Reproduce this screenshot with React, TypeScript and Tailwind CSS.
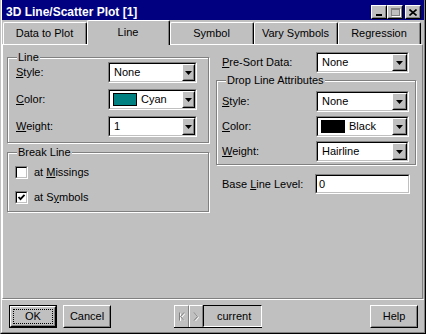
import React from "react";

const raised =
  "border border-t-white border-l-white border-r-black border-b-black";
const raisedInner =
  "border border-t-[#c0c0c0] border-l-[#c0c0c0] border-r-[#808080] border-b-[#808080]";

function U({ children }: { children: React.ReactNode }) {
  return <span className="underline underline-offset-[1px] decoration-1">{children}</span>;
}

function Arrow() {
  return (
    <svg width="7" height="4" viewBox="0 0 7 4">
      <path d="M0 0h7L3.5 4z" fill="#000" />
    </svg>
  );
}

function Combo({
  w,
  text,
  swatch,
  btn = 14,
}: {
  w: number;
  text: string;
  swatch?: string;
  btn?: number;
}) {
  return (
    <div
      className="flex h-[21px] border border-t-[#808080] border-l-[#808080] border-r-white border-b-white"
      style={{ width: w }}
    >
      <div className="flex flex-1 items-stretch bg-white border border-t-black border-l-black border-r-[#c0c0c0] border-b-[#c0c0c0]">
        <div className="flex flex-1 items-center pl-[4px] gap-[4px]">
          {swatch && (
            <span
              className="inline-block w-[24px] h-[13px] -ml-[1px] border border-black"
              style={{ background: swatch }}
            />
          )}
          <span>{text}</span>
        </div>
        <div className={`flex ${raised}`} style={{ width: btn }}>
          <div className={`flex flex-1 items-center justify-center bg-[#c0c0c0] ${raisedInner}`}>
            <Arrow />
          </div>
        </div>
      </div>
    </div>
  );
}

function Group({
  title,
  className,
  children,
}: {
  title: React.ReactNode;
  className: string;
  children: React.ReactNode;
}) {
  return (
    <div
      className={`relative border border-[#808080] shadow-[inset_1px_1px_0_#fff,1px_1px_0_#fff] ${className}`}
    >
      <span className="absolute -top-[7px] left-[9px] bg-[#c0c0c0] px-[1px] leading-[13px]">
        {title}
      </span>
      {children}
    </div>
  );
}

function Check({ checked, label }: { checked?: boolean; label: React.ReactNode }) {
  return (
    <div className="flex items-center h-[13px]">
      <div className="w-[13px] h-[13px] border border-t-[#808080] border-l-[#808080] border-r-white border-b-white">
        <div className="w-full h-full bg-white border border-t-black border-l-black border-r-[#c0c0c0] border-b-[#c0c0c0]">
          {checked && (
            <svg width="9" height="9" viewBox="0 0 9 9">
              <path d="M1.5 4 L3.5 6.2 L7.5 1.8" stroke="#000" strokeWidth="1.8" fill="none" />
            </svg>
          )}
        </div>
      </div>
      <span className="ml-[6px]">{label}</span>
    </div>
  );
}

function Button({ children, def, w = 48 }: { children: React.ReactNode; def?: boolean; w?: number }) {
  if (def) {
    return (
      <div className="flex h-[23px] border border-black" style={{ width: w }}>
        <div className={`flex flex-1 ${raised}`}>
          <div className={`flex flex-1 p-[1px] ${raisedInner}`}>
            <div className="flex flex-1 items-center justify-center border border-dotted border-black">
              {children}
            </div>
          </div>
        </div>
      </div>
    );
  }
  return (
    <div className={`flex h-[23px] ${raised}`} style={{ width: w }}>
      <div className={`flex flex-1 items-center justify-center ${raisedInner}`}>{children}</div>
    </div>
  );
}

function Tab({ label, w, active }: { label: string; w: number; active?: boolean }) {
  if (active) {
    return (
      <div
        className="relative z-10 -mb-[1px] h-[25px] flex items-center justify-center bg-[#c0c0c0] border-t border-l border-t-white border-l-white border-r border-r-black rounded-tl-[2px] rounded-tr-[2px]"
        style={{ width: w }}
      >
        <div className="flex-1 h-full flex items-center justify-center border-r border-r-[#808080] pb-[1px]">
          {label}
        </div>
      </div>
    );
  }
  return (
    <div
      className="h-[22px] flex bg-[#c0c0c0] border-t border-l border-t-white border-l-white border-r border-r-black rounded-tl-[2px] rounded-tr-[2px]"
      style={{ width: w }}
    >
      <div className="flex-1 flex items-center justify-center border-r border-r-[#808080]">{label}</div>
    </div>
  );
}

function TitleBtn({ children }: { children: React.ReactNode }) {
  return (
    <div className={`w-[16px] h-[14px] flex bg-[#c0c0c0] ${raised}`}>
      <div className={`flex-1 flex items-center justify-center ${raisedInner}`}>{children}</div>
    </div>
  );
}

export default function App() {
  return (
    <div className="w-[426px] h-[334px] bg-[#c0c0c0] text-black text-[11px] leading-[13px] font-['Liberation_Sans',Arial,sans-serif] border-l border-r border-b border-l-[#c0c0c0] border-r-black border-b-black">
      <div className="h-full flex flex-col border-l border-r border-b border-l-white border-r-[#808080] border-b-[#808080]">
        {/* title bar */}
        <div className="h-[20px] flex items-center bg-[#000080] pt-[5px] pb-[1px] pl-[4px] pr-[3px]">
          <span className="flex-1 text-white font-bold text-[12px] leading-[14px]">
            3D Line/Scatter Plot [1]
          </span>
          <TitleBtn>
            <span className="block w-[6px] h-[2px] bg-black mt-[5px] -ml-[1px]" />
          </TitleBtn>
          <TitleBtn>
            <span className="block w-[9px] h-[8px] border border-[#808080] border-t-2 shadow-[1px_1px_0_#fff]" />
          </TitleBtn>
          <div className="w-[2px]" />
          <TitleBtn>
            <svg width="8" height="7" viewBox="0 0 8 7">
              <path d="M0.5 0.5 L7.5 6.5 M7.5 0.5 L0.5 6.5" stroke="#000" strokeWidth="1.6" />
            </svg>
          </TitleBtn>
        </div>

        {/* tabs */}
        <div className="h-[24px] flex items-end pl-[1px]">
          <Tab label="Data to Plot" w={84} />
          <Tab label="Line" w={83} active />
          <Tab label="Symbol" w={84} />
          <Tab label="Vary Symbols" w={84} />
          <Tab label="Regression" w={83} />
        </div>

        {/* panel */}
        <div className="h-[255px] mr-[1px] flex gap-[7px] pl-[4px] border-t border-l border-r border-b border-t-white border-l-white border-r-[#808080] border-b-[#808080]">
          {/* left column */}
          <div className="w-[202px] flex flex-col">
            <Group title="Line" className="mt-[12px] pt-[4px] pb-[5px] pl-[8px] flex flex-col gap-[6px]">
              <div className="flex items-center">
                <span className="w-[92px]">
                  <U>S</U>tyle:
                </span>
                <Combo w={89} text="None" btn={13} />
              </div>
              <div className="flex items-center">
                <span className="w-[92px]">
                  <U>C</U>olor:
                </span>
                <Combo w={89} text="Cyan" swatch="#008080" btn={13} />
              </div>
              <div className="flex items-center">
                <span className="w-[92px]">
                  <U>W</U>eight:
                </span>
                <Combo w={89} text="1" btn={13} />
              </div>
            </Group>

            <Group title="Break Line" className="mt-[9px] pt-[13px] pb-[7px] pl-[7px] flex flex-col gap-[12px]">
              <Check
                label={
                  <>
                    at <U>M</U>issings
                  </>
                }
              />
              <Check
                checked
                label={
                  <>
                    at S<U>y</U>mbols
                  </>
                }
              />
            </Group>
          </div>

          {/* right column */}
          <div className="w-[200px] flex flex-col">
            <div className="mt-[7px] flex items-center pl-[6px]">
              <span className="w-[94px]">
                <U>P</U>re-Sort Data:
              </span>
              <Combo w={93} text="None" btn={15} />
            </div>

            <Group
              title="Drop Line Attributes"
              className="mt-[7px] pt-[10px] pb-[2px] pl-[5px] flex flex-col gap-[4px]"
            >
              <div className="flex items-center">
                <span className="w-[94px]">
                  <U>S</U>tyle:
                </span>
                <Combo w={93} text="None" btn={15} />
              </div>
              <div className="flex items-center">
                <span className="w-[94px]">
                  <U>C</U>olor:
                </span>
                <Combo w={93} text="Black" swatch="#000000" btn={15} />
              </div>
              <div className="flex items-center">
                <span className="w-[94px]">
                  <U>W</U>eight:
                </span>
                <Combo w={93} text="Hairline" btn={15} />
              </div>
            </Group>

            <div className="mt-[9px] flex items-center pl-[6px]">
              <span className="w-[93px]">
                Base <U>L</U>ine Level:
              </span>
              <div className="w-[95px] h-[20px] border border-t-[#808080] border-l-[#808080] border-r-white border-b-white">
                <div className="h-full flex items-center pl-[2px] bg-white border border-t-black border-l-black border-r-[#c0c0c0] border-b-[#c0c0c0]">
                  0
                </div>
              </div>
            </div>
          </div>
        </div>
        <div className="h-[1px] bg-white" />

        {/* bottom buttons */}
        <div className="flex items-start pt-[5px] pl-[7px] pr-[6px]">
          <Button def>OK</Button>
          <div className="ml-[6px]">
            <Button>Cancel</Button>
          </div>
          <div className="ml-[63px] flex h-[23px] border-b border-b-black">
            <div className="w-[15px] flex border-t border-l border-t-white border-l-white border-r border-r-[#808080] items-center justify-center">
              <svg width="7" height="9" viewBox="0 0 7 9">
                <path d="M1.5 0.5v8M6 0.5L2.5 4.5L6 8.5" stroke="#fff" fill="none" transform="translate(1 1)" />
                <path d="M1.5 0.5v8M6 0.5L2.5 4.5L6 8.5" stroke="#808080" fill="none" />
              </svg>
            </div>
            <div className="w-[14px] flex border-t border-l border-t-white border-l-white border-r border-r-[#808080] items-center justify-center">
              <svg width="6" height="9" viewBox="0 0 6 9">
                <path d="M1 0.5L4.5 4.5L1 8.5" stroke="#fff" fill="none" transform="translate(1 1)" />
                <path d="M1 0.5L4.5 4.5L1 8.5" stroke="#808080" fill="none" />
              </svg>
            </div>
            <div className="w-[59px] flex items-center pl-[13px] border border-t-black border-l-black border-r-white border-b-white">
              current
            </div>
          </div>
          <div className="ml-auto">
            <Button>Help</Button>
          </div>
        </div>
      </div>
    </div>
  );
}
